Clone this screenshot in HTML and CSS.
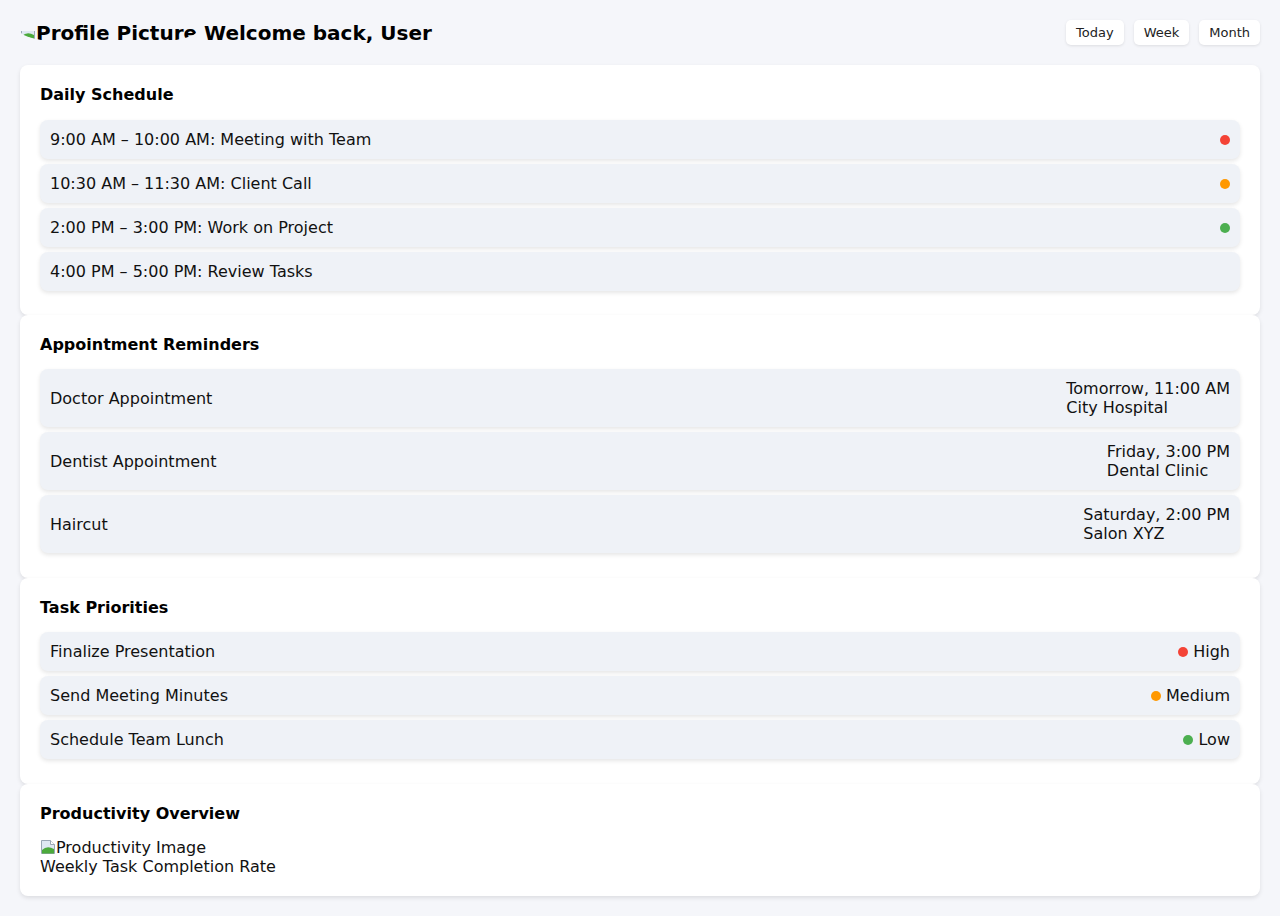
FILE: index.html
```html
<!DOCTYPE html>
<html lang="en">
<head>
<meta charset="utf-8">
<title>Dashboard</title>
<link rel="stylesheet" href="styles.css">
</head>
<body>
<header class="header">
  <h1 class="title">
    <span class="avatar"><svg class="broken broken-clip" width="16" height="16" viewBox="0 0 16 16"><path d="M1.5 1.5h9l4 4v9h-13z" fill="#dfe8f2" stroke="#9aa7b5"/><path d="M2 14.5 L2 11 Q7 6 14 10 L14 14.5z" fill="#4caa3c"/><path d="M10.5 1.5v4h4" fill="#fff" stroke="#9aa7b5"/></svg>Profile Picture</span> Welcome back, User
  </h1>
  <nav class="views">
    <button class="view-btn">Today</button>
    <button class="view-btn">Week</button>
    <button class="view-btn">Month</button>
  </nav>
</header>

<main class="main">
  <section class="card">
    <h2 class="card-title">Daily Schedule</h2>
    <ul class="list">
      <li class="item"><span>9:00 AM – 10:00 AM: Meeting with Team</span><span class="dot red"></span></li>
      <li class="item"><span>10:30 AM – 11:30 AM: Client Call</span><span class="dot orange"></span></li>
      <li class="item"><span>2:00 PM – 3:00 PM: Work on Project</span><span class="dot green"></span></li>
      <li class="item"><span>4:00 PM – 5:00 PM: Review Tasks</span></li>
    </ul>
  </section>

  <section class="card">
    <h2 class="card-title">Appointment Reminders</h2>
    <ul class="list">
      <li class="item"><span>Doctor Appointment</span><span class="when">Tomorrow, 11:00 AM<br>City Hospital</span></li>
      <li class="item"><span>Dentist Appointment</span><span class="when">Friday, 3:00 PM<br>Dental Clinic</span></li>
      <li class="item"><span>Haircut</span><span class="when">Saturday, 2:00 PM<br>Salon XYZ</span></li>
    </ul>
  </section>

  <section class="card">
    <h2 class="card-title">Task Priorities</h2>
    <ul class="list">
      <li class="item"><span>Finalize Presentation</span><span class="prio"><span class="dot red"></span>High</span></li>
      <li class="item"><span>Send Meeting Minutes</span><span class="prio"><span class="dot orange"></span>Medium</span></li>
      <li class="item"><span>Schedule Team Lunch</span><span class="prio"><span class="dot green"></span>Low</span></li>
    </ul>
  </section>

  <section class="card">
    <h2 class="card-title">Productivity Overview</h2>
    <div class="overview">
      <div><svg class="broken" width="16" height="16" viewBox="0 0 16 16"><path d="M1.5 1.5h9l4 4v9h-13z" fill="#dfe8f2" stroke="#9aa7b5"/><path d="M2 14.5 L2 11 Q7 6 14 10 L14 14.5z" fill="#4caa3c"/><path d="M10.5 1.5v4h4" fill="#fff" stroke="#9aa7b5"/></svg>Productivity Image</div>
      <div>Weekly Task Completion Rate</div>
    </div>
  </section>
</main>
</body>
</html>
```

FILE: styles.css
```css
* { box-sizing: border-box; }

html, body {
  margin: 0;
  padding: 0;
}

body {
  background: #f5f6fa;
  font-family: "DejaVu Sans", sans-serif;
  color: #111;
  padding: 20px;
}

.header {
  display: flex;
  justify-content: space-between;
  align-items: center;
  margin-bottom: 20px;
  height: 25px;
}

.title {
  margin: 0;
  padding-top: 2px;
  font-size: 20px;
  font-weight: bold;
  color: #000;
  line-height: 23px;
  white-space: nowrap;
}

.avatar {
  display: inline-block;
  line-height: 23px;
  clip-path: ellipse(50% 62% at 50% 38%);
}

.broken {
  vertical-align: -2px;
}

.broken-clip {
  clip-path: inset(6px 0 0 0);
  vertical-align: -1px;
}

.views {
  display: flex;
  gap: 10px;
}

.view-btn {
  font-family: "DejaVu Sans", sans-serif;
  font-size: 13px;
  line-height: 15px;
  padding: 5px 10px;
  border: none;
  border-radius: 5px;
  background: #fff;
  color: #222;
  box-shadow: 0 1px 3px rgba(0, 0, 0, 0.1);
}

.card {
  background: #fff;
  border-radius: 8px;
  box-shadow: 0 2px 4px rgba(0, 0, 0, 0.1);
  padding: 20px;
}

.card-title {
  margin: 0 0 15px;
  font-size: 16px;
  line-height: 19px;
  font-weight: bold;
  color: #000;
}

.card:first-child .list {
  padding-top: 1px;
  margin-bottom: -1px;
}

.list {
  list-style: none;
  margin: 0;
  padding: 0;
}

.item {
  display: flex;
  justify-content: space-between;
  align-items: center;
  background: #eff2f7;
  border-radius: 8px;
  box-shadow: 0 2px 4px rgba(0, 0, 0, 0.1);
  padding: 10px;
  margin-bottom: 5px;
  font-size: 16px;
  line-height: 19px;
  color: #111;
}

.when {
  text-align: left;
}

.dot {
  display: inline-block;
  width: 10px;
  height: 10px;
  border-radius: 50%;
}

.red { background: #f44336; }
.orange { background: #ff9800; }
.green { background: #4caf50; }

.prio {
  display: flex;
  align-items: center;
  gap: 5px;
}

.overview {
  font-size: 16px;
  line-height: 19px;
  color: #111;
}
```
